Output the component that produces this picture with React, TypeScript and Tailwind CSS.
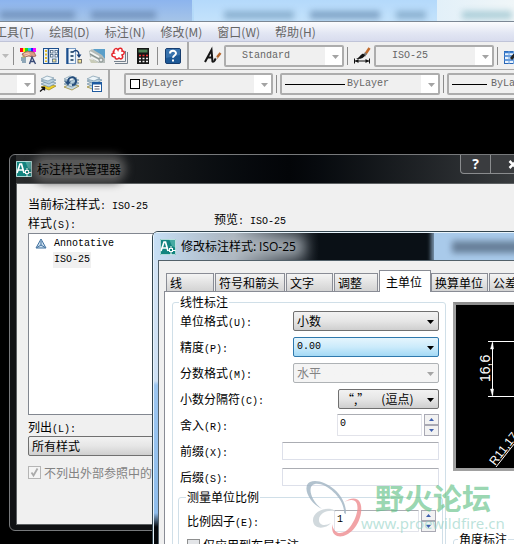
import type { ReactNode } from "react"

const MENUS = ["工具(T)", "绘图(D)", "标注(N)", "修改(M)", "窗口(W)", "帮助(H)"]

const TABS = [
  { name: "线", width: "w-[48px]" },
  { name: "符号和箭头", width: "w-[70px]" },
  { name: "文字", width: "w-[47px]" },
  { name: "调整", width: "w-[44px]" },
  { name: "主单位", width: "w-[52px]" },
  { name: "换算单位", width: "w-[57px]" },
  { name: "公差", width: "w-[47px]" },
]

const MONO = "font-['Liberation_Mono','Noto_Sans_CJK_SC',monospace] text-[10px] leading-none"

function Key({ children }: { children: ReactNode }) {
  return <span className={MONO}>{children}</span>
}

function Arrow({ className }: { className: string }) {
  return (
    <svg className={`pointer-events-none absolute ${className}`} width="7" height="4" viewBox="0 0 7 4" aria-hidden="true">
      <path d="M0 0h7L3.5 4z" fill="currentColor" />
    </svg>
  )
}

/* ---------- toolbar ---------- */

function Separator() {
  return <div className="h-[18px] w-px shrink-0 bg-[#8c8c8c]" />
}

function BarSelect({ label, value, width, pad, children }: { label: string; value: string; width: string; pad: string; children?: ReactNode }) {
  return (
    <div className={`relative shrink-0 ${width}`}>
      <select
        aria-label={label}
        className={`block h-[22px] w-full appearance-none rounded-[2px] border-2 border-[#adadad] bg-linear-to-r from-[#f0f0f0] from-[calc(100%-17px)] to-white to-[calc(100%-17px)] text-[#666] ${MONO} ${pad}`}
      >
        <option>{value}</option>
      </select>
      {children}
      <Arrow className="right-[5px] top-[10px] text-[#a3a3a3]" />
    </div>
  )
}

function IconButton({ label, children }: { label: string; children: ReactNode }) {
  return (
    <button type="button" aria-label={label} className="flex h-5 w-4 shrink-0 items-center justify-center">
      <svg width="16" height="16" viewBox="0 0 16 16" className="shrink-0 overflow-visible">
        {children}
      </svg>
    </button>
  )
}

function PropertiesIcon() {
  return (
    <>
      <rect x="0" y="0" width="3" height="4" fill="#f02" />
      <rect x="3" y="0" width="2" height="4" fill="#fe0" />
      <rect x="5" y="0" width="3" height="4" fill="#2d2" />
      <rect x="8" y="0" width="3" height="4" fill="#1ce" />
      <rect x="11" y="0" width="2" height="4" fill="#22f" />
      <rect x="13" y="0" width="3" height="4" fill="#f0f" />
      <path d="M2 6l5-3 7 1 2 4-4 1-3-1-5 1z" fill="#d99a84" stroke="#8c5044" strokeWidth=".7" />
      <path d="M4 6l5-1M5 8l5-2" stroke="#f5cdb9" />
      <path d="M1 10h5M1 12h5M2 14h4" stroke="#6f8fa5" strokeWidth="1.5" />
      <path d="M2 9h3" stroke="#b9b95c" />
      <path d="M9.500 16l2.500-7 3.500 7M10.500 13.500h4" stroke="#394b78" strokeWidth="1.400" fill="none" />
    </>
  )
}

function GridCells({ x }: { x: number }) {
  return (
    <g fill="#fff" stroke="#48627e" strokeWidth=".8">
      <rect x={x} y="2.500" width="2.500" height="2.500" />
      <rect x={x + 4.5} y="2.500" width="2.500" height="2.500" />
      <rect x={x} y="6.500" width="2.500" height="2.500" />
      <rect x={x + 4.5} y="6.500" width="2.500" height="2.500" />
      <rect x={x + 2} y="11" width="3.500" height="3" fill="#f4e49a" />
    </g>
  )
}

function DesignCenterIcon() {
  return (
    <>
      <rect x=".5" y=".5" width="15" height="15" fill="#e9f2fb" stroke="#1c4e8c" />
      <path d="M5.500 0v16" stroke="#1c4e8c" strokeWidth="1.500" />
      <path d="M3 2v12" stroke="#e0bb2c" strokeWidth="2" strokeDasharray="2 1.500" />
      <GridCells x={7.5} />
    </>
  )
}

function PaletteIcon() {
  return (
    <>
      <rect x=".5" y=".5" width="9" height="15" fill="#eef5fc" stroke="#7a9cc4" />
      <path d="M1.500 0v16" stroke="#1c4e8c" strokeWidth="2" />
      <path d="M4.500 4h3M4.500 8h3M4.500 12h3" stroke="#40607e" strokeWidth="2" />
      <path d="M7 4c3-3 6-1 6 3" stroke="#173f78" strokeWidth="1.300" fill="none" />
      <path d="M10.500 6.500h5l-2.500 3.500z" fill="#173f78" />
      <rect x="12" y="11.500" width="3.500" height="3.500" fill="#f4e49a" stroke="#555" strokeWidth=".8" />
    </>
  )
}

function SheetSetIcon() {
  return (
    <>
      <path d="M4 1h12v10L8 7z" fill="#5b9fc9" />
      <path d="M0 3l3-2 10 6 3 4v4H9L1 9z" fill="#b5bcb9" />
      <path d="M1 4l9 5M2 9l8 4" stroke="#f4f6f5" strokeWidth="1.700" />
      <path d="M1 6l9 5" stroke="#7f8b89" />
      <path d="M0 11l5 1 4 3H2z" fill="#c8cbb8" />
      <circle cx="12" cy="12" r="2" fill="#e8ebea" stroke="#85908e" />
    </>
  )
}

function MarkupIcon() {
  return (
    <>
      <path d="M3 15.500h12.500V4M2 13.500h11.500V3" fill="none" stroke="#75818d" />
      <path d="M0 .5h12v11H0z" fill="#f7f7f7" />
      <path d="M2 3c0-3 3-3 4-1 1-3 5-2 4 1 3 0 3 3 0 4 2 3-1 5-3 3-2 2-4 1-4-1-4 0-4-4-1-4-1-1-1-2 0-2z" fill="#fff" stroke="#e5262b" strokeWidth="1.500" />
    </>
  )
}

function CalcIcon() {
  return (
    <>
      <rect x="2" y="0" width="12" height="16" fill="#171717" />
      <rect x="3.500" y="1.500" width="9" height="3" fill="#4c8055" />
      <path d="M4 7.500h9" stroke="#e33" strokeWidth="1.500" strokeDasharray="2 1.500" />
      <path d="M4 10.500h9M4 13.500h9" stroke="#eee" strokeWidth="1.500" strokeDasharray="2 1.500" />
    </>
  )
}

function HelpIcon() {
  return (
    <>
      <rect x=".5" y=".5" width="15" height="15" rx="1.500" fill="#1d5997" stroke="#173d6e" />
      <path d="M1 1h14v6L1 10z" fill="#4a84bd" opacity=".6" />
      <path d="M5 5.500C5 2 11 2 11 5.300c0 2.200-3 2.200-3 4.500" fill="none" stroke="#fff" strokeWidth="2" />
      <rect x="7" y="11.500" width="2" height="2" fill="#fff" />
    </>
  )
}

function TextStyleIcon() {
  return (
    <>
      <path d="M0 14L6.500 2l1 12M2 9.500h6" fill="none" stroke="#151515" strokeWidth="2" />
      <path d="M15.500 5l-4 5" stroke="#b5652b" strokeWidth="2.500" />
      <path d="M12 9l-2 2" stroke="#ddd" strokeWidth="2" />
      <path d="M11.500 11c-1 3-3 4-5 4 2-1 2-4 3.500-5z" fill="#1a1a1a" />
    </>
  )
}

function DimStyleIcon() {
  return (
    <>
      <path d="M15.500 0l-4 6" stroke="#c06a2c" strokeWidth="2.500" />
      <path d="M12 5l-2 3" stroke="#777" strokeWidth="2.500" />
      <path d="M11 7c-1 3-4 4.500-9 4 3-1 4-4 7-5.500z" fill="#111" />
      <path d="M.5 10.500v5M15.500 10.500v5M1 13h14" stroke="#111" />
      <path d="M1 13l3.500-2v4zM15 13l-3.500-2v4z" fill="#111" />
    </>
  )
}

function TableStyleIcon() {
  return (
    <>
      <rect x=".5" y="3.500" width="13" height="12" fill="#e9f3fe" stroke="#2a66b5" />
      <path d="M0 4.500h14M0 8h14M0 12h14" stroke="#3c7fd0" strokeWidth="1.500" />
      <path d="M5 3v13M9.500 3v13" stroke="#6fa2dd" />
      <path d="M14 3L7 11" stroke="#222" strokeWidth="3" />
    </>
  )
}

function Layers({ last }: { last: string }) {
  return (
    <g strokeWidth=".7">
      <path d="M1 11l7-3 8 2-7 4z" fill={last} stroke="#9b8420" />
      <path d="M1 8l7-3 8 2-7 4z" fill="#c5d8e4" stroke="#6f8ea3" />
      <path d="M1 5l7-3 8 2-7 4z" fill="#b5cddb" stroke="#6f8ea3" />
      <path d="M1 3l6-3 7 2-6 3z" fill="#edf5f9" stroke="#7997aa" />
    </g>
  )
}

function LayerPropsIcon() {
  return (
    <>
      <Layers last="#f0cf23" />
      <path d="M0 15.500L4 12M1.500 11.500H4.500V14.500" fill="none" stroke="#111" strokeWidth="1.300" />
    </>
  )
}

function LayerPrevIcon() {
  return (
    <>
      <Layers last="#c5d8e4" />
      <path d="M5 6c0-6 8-6 8-1 0 3-2 4-4 4" fill="none" stroke="#254d7c" strokeWidth="2" />
      <path d="M1.500 5.500h6.500L5 9.500z" fill="#254d7c" />
    </>
  )
}

function LayerStateIcon() {
  return (
    <>
      <Layers last="#c5d8e4" />
      <rect x="6.500" y="6.500" width="9" height="9" fill="#fff" stroke="#1e5aa0" />
      <path d="M6 7.500h10" stroke="#1e5aa0" strokeWidth="2" />
      <path d="M8.500 10.500h5M8.500 13h5" stroke="#667" />
    </>
  )
}

function Toolbars() {
  return (
    <div className="overflow-hidden border-b-2 border-[#a5a5a5] bg-[#f0f0f0]">
      <div className="flex h-[28px] border-b border-[#aaa]">
        <div className="flex shrink-0 items-center border-r-2 border-[#aaa] pr-[6px]">
          <div className="relative h-4 w-[13px]">
            <Arrow className="left-[2px] top-[6px] text-[#bbb]" />
          </div>
          <Separator />
          <div className="flex gap-[7px] px-[6px]">
            <IconButton label="特性"><PropertiesIcon /></IconButton>
            <IconButton label="设计中心"><DesignCenterIcon /></IconButton>
            <IconButton label="工具选项板"><PaletteIcon /></IconButton>
            <IconButton label="图纸集管理器"><SheetSetIcon /></IconButton>
            <IconButton label="标记集管理器"><MarkupIcon /></IconButton>
            <IconButton label="快速计算器"><CalcIcon /></IconButton>
          </div>
          <Separator />
          <div className="flex pl-[7px]">
            <IconButton label="帮助"><HelpIcon /></IconButton>
          </div>
        </div>
        <div className="flex shrink-0 items-center gap-[3px] pl-4">
          <IconButton label="文字样式"><TextStyleIcon /></IconButton>
          <BarSelect label="文字样式" value="Standard" width="w-[120px]" pad="pl-4" />
          <Separator />
          <div className="flex pl-[3px] pr-px"><IconButton label="标注样式"><DimStyleIcon /></IconButton></div>
          <BarSelect label="标注样式" value="ISO-25" width="w-[120px]" pad="pl-4" />
          <Separator />
          <div className="flex pl-[3px]"><IconButton label="表格样式"><TableStyleIcon /></IconButton></div>
        </div>
      </div>
      <div className="flex h-[28px]">
        <div className="flex shrink-0 items-center gap-1 border-r-2 border-[#aaa] pr-[6px]">
          <BarSelect label="图层" value="" width="-ml-[84px] w-[120px]" pad="pl-4" />
          <div className="flex gap-[7px]">
            <IconButton label="图层特性"><LayerPropsIcon /></IconButton>
            <IconButton label="上一个图层"><LayerPrevIcon /></IconButton>
            <IconButton label="图层状态"><LayerStateIcon /></IconButton>
          </div>
        </div>
        <div className="flex shrink-0 items-center gap-[3px] pl-[14px]">
          <BarSelect label="颜色" value="ByLayer" width="w-[149px]" pad="pl-4">
            <span className="pointer-events-none absolute left-[6px] top-[6px] size-[10px] border border-black bg-white" />
          </BarSelect>
          <Separator />
          <BarSelect label="线型" value="ByLayer" width="w-[160px]" pad="pl-[65px]">
            <span className="pointer-events-none absolute left-[5px] top-[11px] h-px w-[60px] bg-black" />
          </BarSelect>
          <Separator />
          <BarSelect label="线宽" value="ByLayer" width="w-[160px]" pad="pl-[42px]">
            <span className="pointer-events-none absolute left-[5px] top-[11px] h-px w-[35px] bg-black" />
          </BarSelect>
        </div>
      </div>
    </div>
  )
}

/* ---------- dialog parts ---------- */

function AppIcon() {
  return (
    <svg width="16" height="16" viewBox="0 0 16 16" className="shrink-0" aria-hidden="true">
      <rect width="16" height="16" fill="#12847f" />
      <path d="M9 0h7v9l-4-2z" fill="#45aaa3" />
      <path d="M1 12L4 3h1.500L8 12M2 9h5" stroke="#fff" strokeWidth="1.700" fill="none" />
      <path d="M11 7v9M7 11.500h9" stroke="#fff" />
      <rect x="9.500" y="9.500" width="3" height="3" fill="#12847f" stroke="#fff" />
      <path d="M.5 .5h15v15H.5z" fill="none" stroke="#d5efed" strokeWidth=".8" />
    </svg>
  )
}

type FieldSelectProps = { id: string; value: string; width?: string; active?: boolean; disabled?: boolean; mono?: boolean }

function FieldSelect({ id, value, width = "w-[146px]", active, disabled, mono }: FieldSelectProps) {
  const tone = active
    ? "border-[#2f79ad] from-[#e5f5fd] via-[#cbebfb] to-[#a3d9f5] text-black"
    : disabled
      ? "border-[#aeb2b5] from-[#f4f4f4] via-[#f4f4f4] to-[#f4f4f4] text-[#838383]"
      : "border-[#707070] from-[#f2f2f2] via-[#e6e6e6] to-[#cfcfcf] text-black"
  return (
    <div className={`relative ${width}`}>
      <select
        id={id}
        disabled={disabled}
        className={`block h-5 w-full appearance-none rounded-[2px] border bg-linear-to-b pl-[3px] opacity-100 [text-spacing-trim:space-all] ${tone} ${mono ? MONO : "text-[12px] leading-4"}`}
      >
        <option>{value}</option>
      </select>
      <Arrow className={disabled ? "right-[5px] top-[9px] text-[#a5a5a5]" : "right-[5px] top-[9px] text-black"} />
    </div>
  )
}

function Spinner({ id, value }: { id: string; value: string }) {
  return (
    <div className="flex items-center gap-[2px]">
      <input
        id={id}
        defaultValue={value}
        className={`h-[22px] w-[85px] rounded-[1px] border border-[#e2e3ea] border-t-[#abadb3] bg-white px-[2px] pb-1 ${MONO}`}
      />
      <div className="flex flex-col">
        <button type="button" aria-label="增加" className="h-[11px] w-[15px] border border-[#a9a9b4] bg-[#f2f2f2]">
          <svg width="5" height="3" viewBox="0 0 5 3" className="mx-auto"><path d="M0 3h5L2.500 0z" fill="#3f5fae" /></svg>
        </button>
        <button type="button" aria-label="减少" className="h-[11px] w-[15px] border border-[#a9a9b4] bg-[#f2f2f2]">
          <svg width="5" height="3" viewBox="0 0 5 3" className="mx-auto"><path d="M0 0h5L2.500 3z" fill="#3f5fae" /></svg>
        </button>
      </div>
    </div>
  )
}

function Row({ id, label, hotkey, children }: { id: string; label: string; hotkey: string; children: ReactNode }) {
  return (
    <div className="flex h-[26px] items-center justify-between">
      <label htmlFor={id}>{label}<Key>({hotkey}):</Key></label>
      {children}
    </div>
  )
}

function TextField({ id }: { id: string }) {
  return <input id={id} className="h-[18px] w-[157px] rounded-[1px] border border-[#dde0ea] border-t-[#abadb3] bg-white px-1" />
}

function Preview() {
  return (
    <div className="h-[169px] border-3 border-[#a0a0a0] border-t-[#8e8e8e] bg-black">
      <svg width="180" height="163" viewBox="0 0 180 163" fill="none" stroke="#fff" aria-hidden="true">
        <path d="M32 36.500h148M32 91.500h148M36.500 38v52" />
        <path d="M36.500 37l-2 7h3zM36.500 91l-2-7h3z" fill="#fff" strokeWidth=".5" />
        <text transform="translate(34 77) rotate(-90)" className="font-['Liberation_Sans',sans-serif] text-[14px]" fill="#fff" stroke="none">16,6</text>
        <text transform="translate(39 161) rotate(-52)" className="font-['Liberation_Sans',sans-serif] text-[12px]" fill="#fff" stroke="none">R11,17</text>
        <path d="M40 162L92 96" />
      </svg>
    </div>
  )
}

function StyleManager() {
  return (
    <section className="absolute left-[9px] top-[154px] w-[560px] rounded-[6px] border border-[#77797b] bg-[#101214] px-[6px] pb-[5px]">
      <header className="flex h-[28px] items-center justify-between bg-linear-to-r from-[#2a2c2d] via-[#030508] via-50% to-[#45484a]">
        <h1 className="flex items-center gap-[5px] text-[12px]">
          <AppIcon />
          <span className="rounded-full bg-[#585858] text-black shadow-[0_0_9px_5px_#585858]">标注样式管理器</span>
        </h1>
        <div className="mr-[27px] flex self-start rounded-b-[4px] border border-t-0 border-[#8a8c8e] bg-[#3a3c3f] text-white">
          <button type="button" aria-label="帮助" className="h-[18px] w-[29px] font-['Open_Sans',sans-serif] text-[14px] leading-4 font-bold">?</button>
          <button type="button" aria-label="关闭" className="flex h-[18px] w-[44px] items-center justify-center border-l border-[#8a8c8e]">
            <svg width="10" height="9" viewBox="0 0 10 9"><path d="M1.500 1l7 7M8.500 1l-7 7" stroke="#fff" strokeWidth="2.500" /></svg>
          </button>
        </div>
      </header>
      <div className="h-[342px] border border-[#5c6062] bg-[#f0f0f0] px-[11px] pt-[10px] text-[12px] leading-[19px]">
        <p>当前标注样式<Key>: ISO-25</Key></p>
        <div className="flex">
          <div className="w-[186px] shrink-0">
            <p>样式<Key>(S):</Key></p>
            <ul className="mr-3 mt-px h-[182px] border border-[#828790] bg-white pt-[2px]">
              <li className="flex h-4 items-center gap-[7px] pl-[6px]">
                <svg width="12" height="12" viewBox="0 0 12 12" fill="none" stroke="#3f709f" aria-hidden="true">
                  <path d="M6 1L1 10h10zM6 3v4M6 7l-4 2.500M6 7l4 2.500" fill="#cfe0ee" />
                </svg>
                <Key>Annotative</Key>
              </li>
              <li className="flex h-4 pl-6"><span className={`bg-[#f0f0f0] px-[1px] py-[3px] ${MONO}`}>ISO-25</span></li>
            </ul>
            <label htmlFor="list" className="mt-[2px] block">列出<Key>(L):</Key></label>
            <FieldSelect id="list" value="所有样式" width="w-[174px]" />
            <div className="mt-[7px] flex items-center gap-[3px] text-[#838383]">
              <span className="relative size-[13px]">
                <input id="xref" type="checkbox" defaultChecked disabled className="block size-[13px] appearance-none border border-[#b5b5b5] bg-[#f4f4f4]" />
                <svg className="pointer-events-none absolute inset-0" width="13" height="13" viewBox="0 0 13 13"><path d="M3.500 6.500l2 3 4-7" fill="none" stroke="#aaa" strokeWidth="1.800" /></svg>
              </span>
              <label htmlFor="xref" className="whitespace-nowrap">不列出外部参照中的样式</label>
            </div>
          </div>
          <p className="-mt-1">预览<Key>: ISO-25</Key></p>
        </div>
      </div>
    </section>
  )
}

function ModifyStyle() {
  return (
    <section className="absolute left-[152px] top-[231px] w-[600px] rounded-tl-[6px] border border-[#33454f] text-[12px]">
      <div className="rounded-tl-[5px] border border-[#e8f4fc] bg-[linear-gradient(#d3e4f5_0,#cfe1f4_148px,#9cc6f0_152px,#8fbdec_280px,#05080b_294px)] pl-1">
        <header className="relative -ml-1 flex h-[27px] items-center overflow-hidden bg-linear-to-r from-[#c7dff5] via-[#a9b3bd] via-[80px] to-[#0a1016] to-[165px]">
          <div className="absolute inset-y-0 right-0 left-[280px] bg-[#a9caea] shadow-[0_0_4px_3px_#7892aa]">
            <div className="ml-[18px] mt-2 h-3 w-[80px] bg-[#4c6078] opacity-70 blur-[3px]" />
          </div>
          <div className="absolute left-[70px] top-1 h-5 w-[80px] bg-[#b9c1c8] opacity-80 blur-[7px]" />
          <h2 className="relative ml-[6px] flex items-center gap-[5px]">
            <AppIcon />
            <span>修改标注样式: <span className="font-['Open_Sans',sans-serif]">ISO-25</span></span>
          </h2>
        </header>
        <div className="h-[400px] border border-[#53616a] bg-[#f0f0f0] pl-[5px] pt-[9px]">
          <div role="tablist" className="flex items-end whitespace-nowrap pl-[2px]">
            {TABS.map((t) => (
              <button
                key={t.name}
                type="button"
                role="tab"
                aria-selected={t.name === "主单位"}
                className={
                  t.name === "主单位"
                    ? `${t.width} -mb-px h-[22px] border border-b-0 border-[#898c95] bg-white px-[6px] text-left`
                    : `${t.width} mr-px h-[18px] border border-b-0 border-[#898c95] bg-linear-to-b from-[#f4f4f4] to-[#d3d3d3] px-[3px] text-left leading-4`
                }
              >
                {t.name}
              </button>
            ))}
          </div>
          <div className="flex h-full gap-[7px] border border-[#898c95] bg-white pl-[7px] pt-1">
            <fieldset className="w-[274px] shrink-0 self-start rounded-[3px] border border-[#d0dfe8] pr-[6px] pl-[7px]">
              <legend className="-ml-px h-3 px-[1px] leading-3">线性标注</legend>
              <Row id="unit" label="单位格式" hotkey="U"><FieldSelect id="unit" value="小数" /></Row>
              <Row id="precision" label="精度" hotkey="P"><FieldSelect id="precision" value="0.00" active mono /></Row>
              <Row id="fraction" label="分数格式" hotkey="M"><FieldSelect id="fraction" value="水平" disabled /></Row>
              <Row id="separator" label="小数分隔符" hotkey="C"><FieldSelect id="separator" value="“,”　(逗点)" width="w-[101px]" /></Row>
              <Row id="round" label="舍入" hotkey="R"><Spinner id="round" value="0" /></Row>
              <Row id="prefix" label="前缀" hotkey="X"><TextField id="prefix" /></Row>
              <Row id="suffix" label="后缀" hotkey="S"><TextField id="suffix" /></Row>
              <fieldset className="-mr-1 -ml-[2px] mt-px h-[120px] rounded-[3px] border border-[#d0dfe8] pr-[6px] pl-2">
                <legend className="-ml-px h-3 px-[1px] leading-3">测量单位比例</legend>
                <div className="mt-[5px] mb-[2px]">
                  <Row id="factor" label="比例因子" hotkey="E"><Spinner id="factor" value="1" /></Row>
                </div>
                <div className="flex items-center gap-[3px]">
                  <input id="layout" type="checkbox" className="size-[13px] appearance-none border border-[#8e8f8f] bg-[#e3e5e8]" />
                  <label htmlFor="layout">仅应用到布局标注</label>
                </div>
              </fieldset>
            </fieldset>
            <div className="mt-[6px] w-[180px] shrink-0">
              <Preview />
              <fieldset className="mt-[62px] h-[80px] rounded-[3px] border border-[#d0dfe8] pl-[4px]">
                <legend className="h-3 px-[1px] leading-3">角度标注</legend>
              </fieldset>
            </div>
          </div>
        </div>
      </div>
    </section>
  )
}

function Watermark() {
  return (
    <div className="pointer-events-none absolute left-[300px] top-[475px] flex">
      <svg width="61" height="64" viewBox="0 0 61 64" fill="none" className="shrink-0 overflow-visible opacity-80" aria-hidden="true">
        <path d="M22 34C8 27 2 11 10 7c12-5 37 11 36 32l-2-1C45 24 26 7 15 9c-8 1-5 16 7 25z" fill="#9fb3c2" />
        <path d="M36 37c-5-7-24-2-23 9 1 9 13 8 18 2-5 3-12 3-12-3 0-8 12-11 17-8z" fill="#c6d0d5" />
        <path d="M43 28c12-9 20-4 18 10-2 14-14 26-24 23-5-2-5-7-5-12 2 12 12 11 18 3 7-9 10-22 5-26-3-2-8-1-12 2z" fill="#ee8d91" />
      </svg>
      <div className="whitespace-nowrap text-center">
        <p className="mt-[6px] text-[29px] leading-8 font-bold text-[#5fbf85]/65">野火论坛</p>
        <p className="font-['Noto_Sans',sans-serif] text-[15px] leading-5 text-[#8fd0c4]/60">www.proewildfire.cn</p>
      </div>
    </div>
  )
}

export default function App() {
  return (
    <main lang="zh-CN" className="relative h-screen overflow-hidden bg-black font-['Noto_Sans_CJK_SC',sans-serif] text-black">
      <div className="relative flex h-[22px] items-center overflow-hidden border-b border-[#7b8794] bg-linear-to-r from-[#7ba6e0] via-[#b8ddfa] via-40% to-[#f0f6f8]">
        <div className="absolute inset-y-0 left-0 w-[192px] bg-linear-to-b from-[#8cb4ee] to-[#a5c4e8]" />
        <div className="absolute inset-y-0 left-[194px] w-[243px] bg-linear-to-b from-[#b4d9fb] to-[#c3e2fb]" />
        <div className="relative mt-2 flex w-full gap-4 opacity-50 blur-[3px]">
          <div className="h-2 w-[75px] bg-[#4a6a94]" />
          <div className="h-2 w-[65px] bg-[#4a6a94]" />
          <div className="ml-[52px] h-2 w-[70px] bg-[#5580a4]" />
          <div className="h-2 w-[70px] bg-[#3f6690]" />
          <div className="h-2 w-[30px] bg-[#5580a4]" />
          <div className="ml-5 h-2 w-[50px] bg-[#6ea9b8]" />
        </div>
      </div>
      <nav className="flex h-[20px] items-center gap-[15px] overflow-hidden border-b border-[#c0c4d8] bg-linear-to-b from-[#fbfcfe] via-[#e2e6f3] via-60% to-[#d8dcee] text-[12px] whitespace-nowrap text-[#666]">
        {MENUS.map((m, i) => (
          <button key={m} type="button" className={i === 0 ? "-ml-[5px] shrink-0" : "shrink-0"}>{m}</button>
        ))}
      </nav>
      <Toolbars />
      <StyleManager />
      <ModifyStyle />
      <Watermark />
    </main>
  )
}
